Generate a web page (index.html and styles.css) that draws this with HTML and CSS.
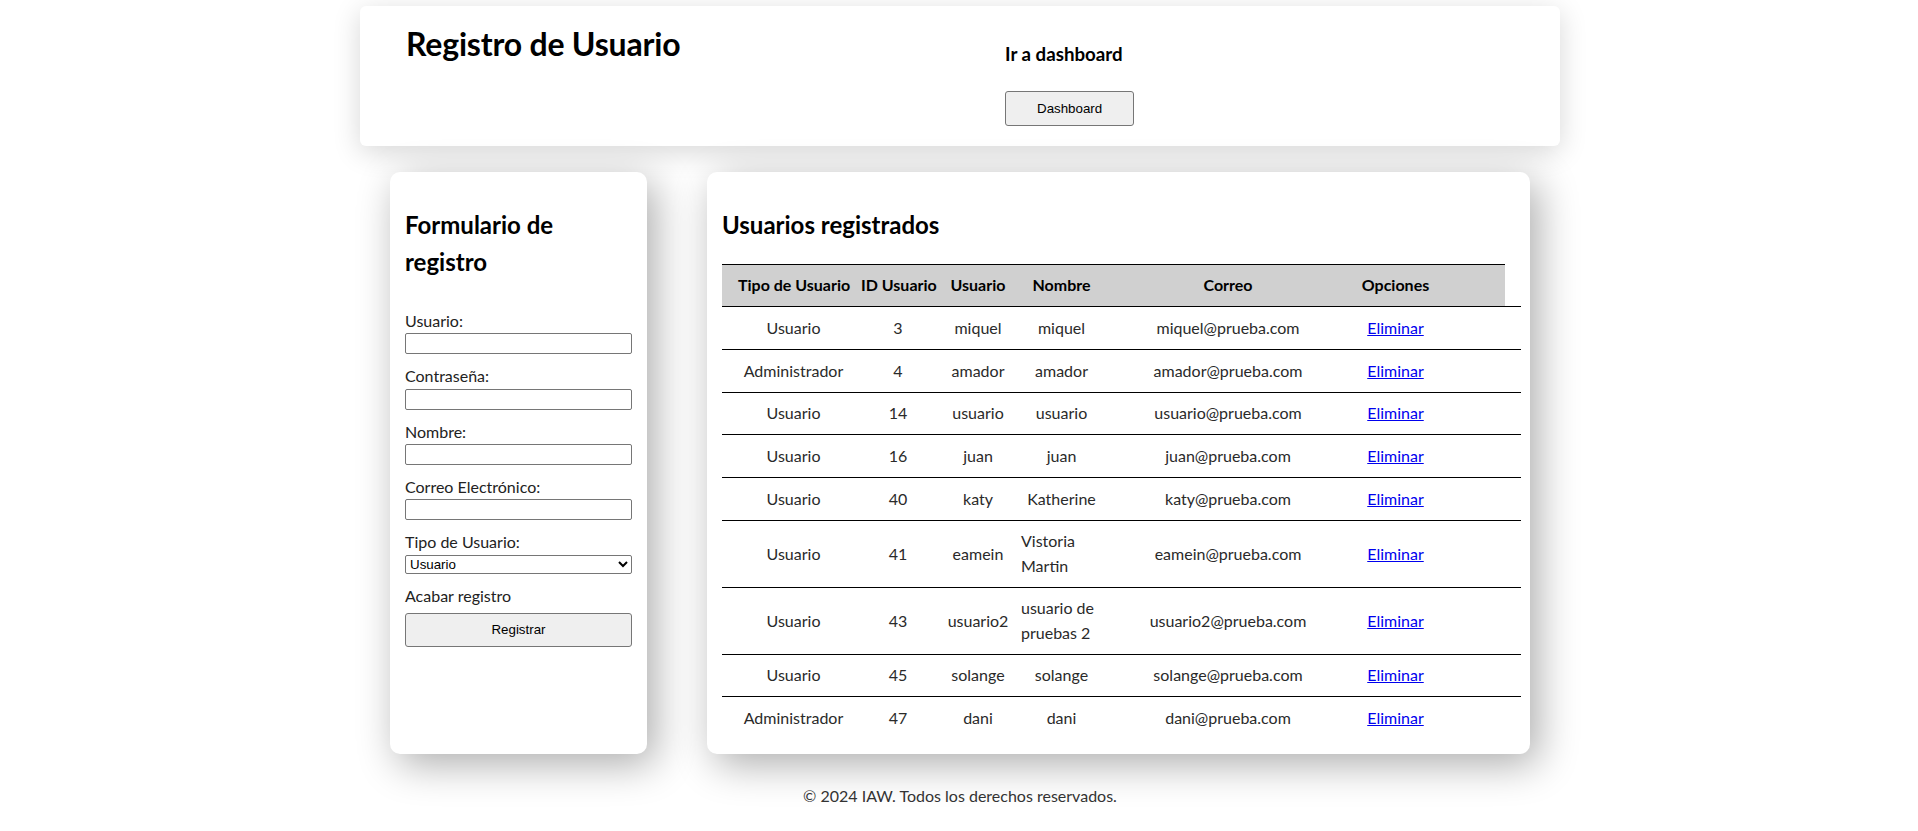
FILE: index.html
```html
<!DOCTYPE html>
<html lang="es">
<head>
<meta charset="utf-8">
<title>Registro de Usuario</title>
<link rel="stylesheet" href="styles.css">
</head>
<body>
<div class="page">
  <header class="site-header">
    <div class="brand">
      <h1>Registro de Usuario</h1>
    </div>
    <div class="nav">
      <h3>Ir a dashboard</h3>
      <button class="btn" type="button">Dashboard</button>
    </div>
  </header>

  <main class="content">
    <section class="card form-card">
      <h2>Formulario de registro</h2>
      <form class="reg-form">
        <label class="field-label" for="u">Usuario:</label>
        <input class="field" id="u" type="text">
        <label class="field-label" for="p">Contraseña:</label>
        <input class="field" id="p" type="password">
        <label class="field-label" for="n">Nombre:</label>
        <input class="field" id="n" type="text">
        <label class="field-label" for="e">Correo Electrónico:</label>
        <input class="field" id="e" type="email">
        <label class="field-label" for="t">Tipo de Usuario:</label>
        <select class="field field-select" id="t">
          <option>Usuario</option>
          <option>Administrador</option>
        </select>
        <span class="field-label finish">Acabar registro</span>
        <button class="btn btn-block" type="button">Registrar</button>
      </form>
    </section>

    <section class="card table-card">
      <h2>Usuarios registrados</h2>
      <table class="users">
        <colgroup>
          <col class="c-tipo"><col class="c-id"><col class="c-user"><col class="c-name"><col class="c-mail"><col class="c-opt"><col class="c-pad"><col class="c-end">
        </colgroup>
        <thead>
          <tr><th>Tipo de Usuario</th><th>ID Usuario</th><th>Usuario</th><th>Nombre</th><th>Correo</th><th>Opciones</th><th></th></tr>
        </thead>
        <tbody>
          <tr><td>Usuario</td><td>3</td><td>miquel</td><td><span class="name">miquel</span></td><td>miquel@prueba.com</td><td><a href="#">Eliminar</a></td><td></td><td></td></tr>
          <tr><td>Administrador</td><td>4</td><td>amador</td><td><span class="name">amador</span></td><td>amador@prueba.com</td><td><a href="#">Eliminar</a></td><td></td><td></td></tr>
          <tr><td>Usuario</td><td>14</td><td>usuario</td><td><span class="name">usuario</span></td><td>usuario@prueba.com</td><td><a href="#">Eliminar</a></td><td></td><td></td></tr>
          <tr><td>Usuario</td><td>16</td><td>juan</td><td><span class="name">juan</span></td><td>juan@prueba.com</td><td><a href="#">Eliminar</a></td><td></td><td></td></tr>
          <tr><td>Usuario</td><td>40</td><td>katy</td><td><span class="name">Katherine</span></td><td>katy@prueba.com</td><td><a href="#">Eliminar</a></td><td></td><td></td></tr>
          <tr><td>Usuario</td><td>41</td><td>eamein</td><td><span class="name">Vistoria Martin</span></td><td>eamein@prueba.com</td><td><a href="#">Eliminar</a></td><td></td><td></td></tr>
          <tr><td>Usuario</td><td>43</td><td>usuario2</td><td><span class="name">usuario de pruebas 2</span></td><td>usuario2@prueba.com</td><td><a href="#">Eliminar</a></td><td></td><td></td></tr>
          <tr><td>Usuario</td><td>45</td><td>solange</td><td><span class="name">solange</span></td><td>solange@prueba.com</td><td><a href="#">Eliminar</a></td><td></td><td></td></tr>
          <tr><td>Administrador</td><td>47</td><td>dani</td><td><span class="name">dani</span></td><td>dani@prueba.com</td><td><a href="#">Eliminar</a></td><td></td><td></td></tr>
        </tbody>
      </table>
    </section>
  </main>

  <footer class="site-footer">
    <p>© 2024 IAW. Todos los derechos reservados.</p>
  </footer>
</div>
</body>
</html>
```

FILE: styles.css
```css
html, body {
  margin: 0;
  background: #ffffff;
}

body {
  padding-left: 2px;
  font-family: "Lato", "Open Sans", sans-serif;
  font-size: 16px;
  line-height: 1.52;
  color: #222222;
}

.page {
  width: 1200px;
  margin: 0 auto;
  padding-top: 6px;
}

/* Header */
.site-header {
  display: grid;
  grid-template-columns: 599px auto;
  padding: 14px 46px 20px;
  background: #ffffff;
  border-radius: 6px;
  box-shadow: 0 6px 28px rgba(0, 0, 0, 0.16);
}

.site-header h1 {
  margin: 0;
  font-size: 32px;
  line-height: 1.52;
  letter-spacing: -0.2px;
  color: #000000;
}

.nav h3 {
  margin: 20px 0 22.7px;
  font-size: 18.72px;
  line-height: 1.52;
  color: #000000;
}

.btn {
  font-family: "Liberation Sans", Arial, sans-serif;
  font-size: 13.333px;
  line-height: normal;
  color: #000000;
  background: #efefef;
  border: 1px solid #767676;
  border-radius: 3px;
  padding: 9px 31px;
  cursor: pointer;
}

.btn-block {
  display: block;
  width: 100%;
  padding: 8.5px 0;
}

/* Main */
.content {
  display: flex;
  gap: 60px;
  padding: 0 30px;
  margin-top: 26px;
  align-items: stretch;
}

.card {
  background: #ffffff;
  border-radius: 10px;
  padding: 15px;
  box-shadow: 8px 10px 40px rgba(0, 0, 0, 0.33);
}

.form-card {
  flex: none;
  width: 257px;
  box-sizing: border-box;
}

.table-card {
  flex: 1;
  min-width: 0;
}

.card h2 {
  margin: 20px 0;
  font-size: 24px;
  line-height: 1.52;
  color: #000000;
}

.reg-form {
  padding-top: 9px;
}

.field-label {
  display: block;
}

.field {
  display: block;
  width: 100%;
  height: 21px;
  box-sizing: border-box;
  margin: 0 0 10px;
  padding: 1px 2px;
  border: 1px solid #767676;
  border-radius: 2px;
  background: #ffffff;
  font-family: "Liberation Sans", Arial, sans-serif;
  font-size: 13.333px;
}

.field-select {
  height: 19px;
  padding: 0;
  color: #000000;
}

.finish {
  margin-bottom: 5px;
}

/* Table */
.users {
  border-collapse: collapse;
  table-layout: fixed;
  width: 799px;
}

.c-tipo { width: 133px; }
.c-id { width: 86px; }
.c-user { width: 74px; }
.c-name { width: 93px; }
.c-mail { width: 240px; }
.c-opt { width: 95px; }
.c-pad { width: 62px; }
.c-end { width: 16px; }

.users th,
.users td {
  padding: 8.7px 6px;
  border-top: 1px solid #000000;
  text-align: center;
  vertical-align: middle;
}

.users td {
  color: #2a2a2a;
}

.users th {
  background: #d0d0d0;
  color: #000000;
  font-weight: bold;
  white-space: nowrap;
}

.users th:first-child,
.users td:first-child {
  padding-left: 16px;
}

.name {
  display: inline-block;
  text-align: left;
  vertical-align: top;
}

.users a {
  color: #0000ee;
  text-decoration: underline;
}

/* Footer */
.site-footer {
  text-align: center;
  color: #333333;
  padding: 30px 0;
}

.site-footer p {
  margin: 0;
}
```
